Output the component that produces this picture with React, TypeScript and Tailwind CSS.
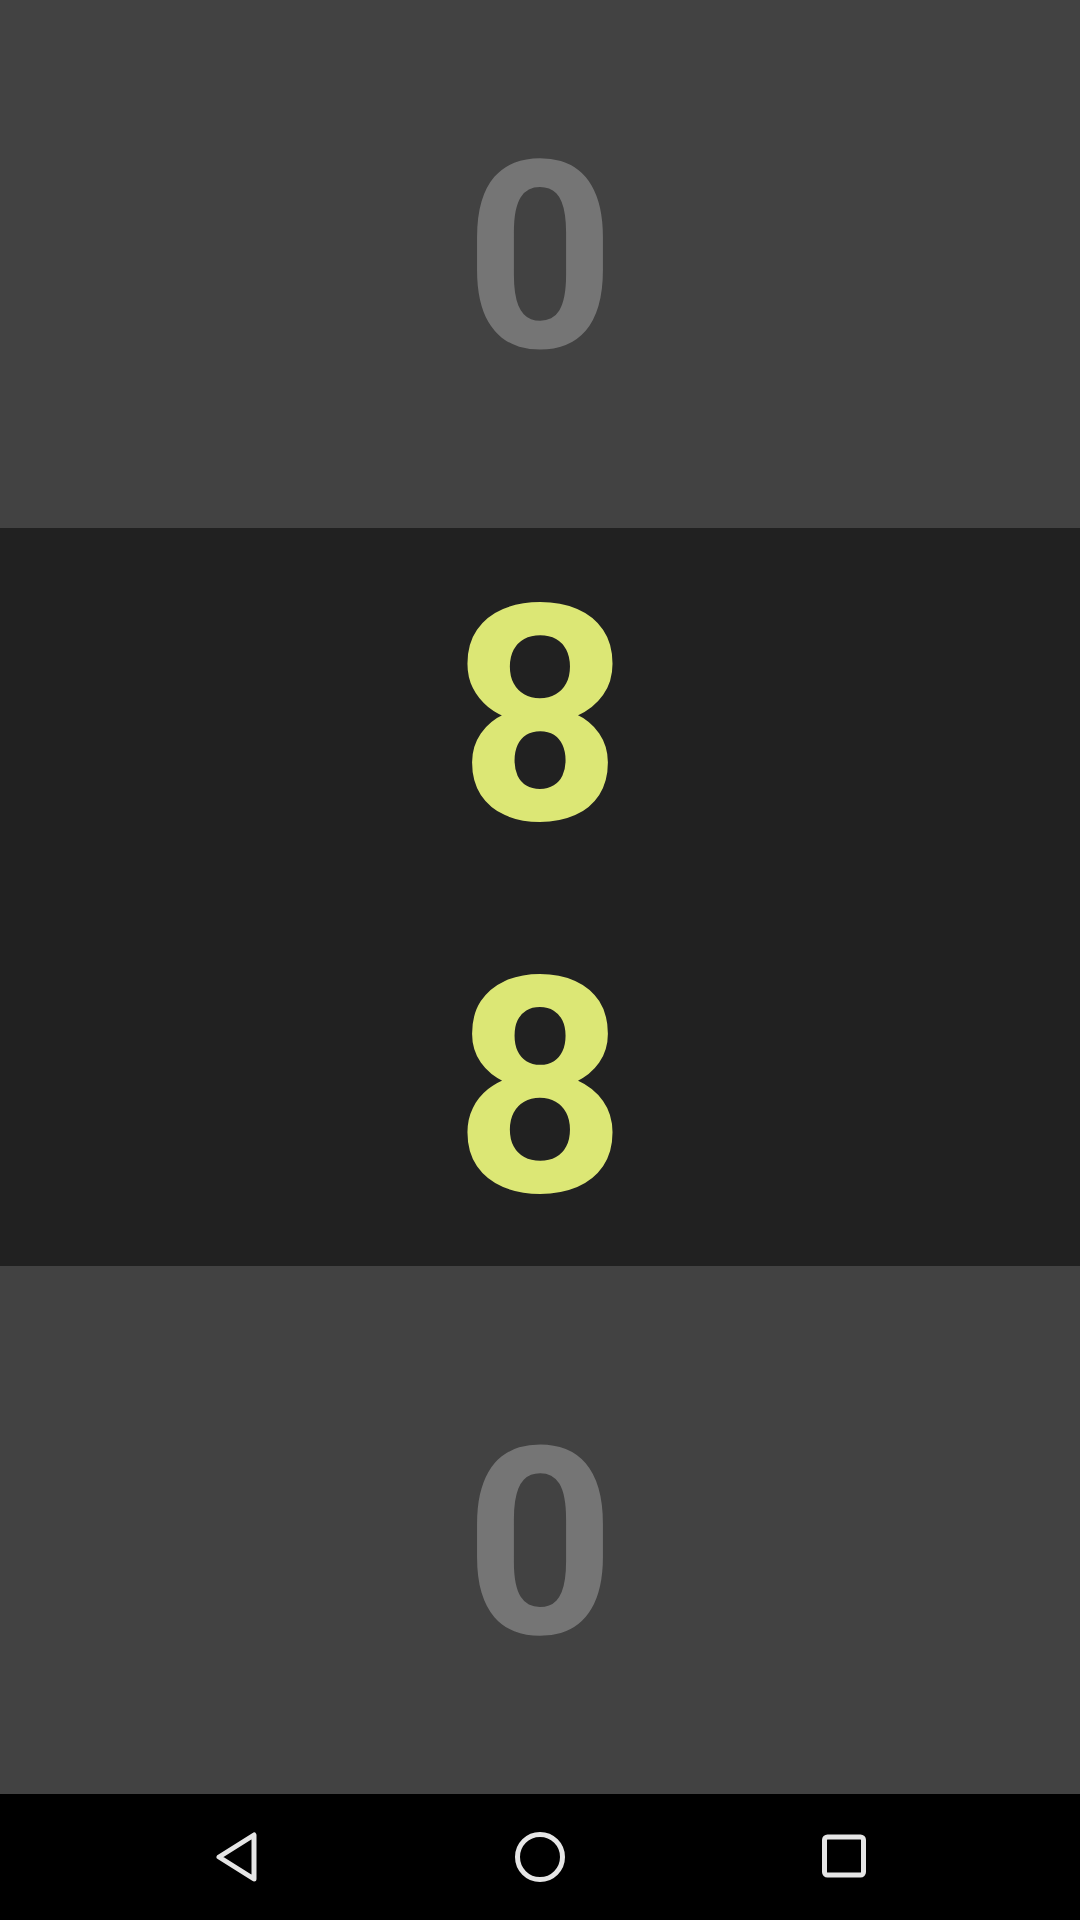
import React from 'react';

const digit = "font-['Roboto',sans-serif] font-bold leading-none select-none";

const NavBar = () => {
  return (
    <div className="flex h-[126px] items-center justify-center gap-[244px] bg-black">
      <svg width="60" height="60" viewBox="0 0 60 60" fill="none">
        <polygon points="13,30 48,8 48,52" stroke="#e6e6e6" strokeWidth="5" strokeLinejoin="round" />
      </svg>
      <svg width="60" height="60" viewBox="0 0 60 60" fill="none">
        <circle cx="30" cy="30" r="22.5" stroke="#e6e6e6" strokeWidth="5" />
      </svg>
      <svg width="60" height="60" viewBox="0 0 60 60" fill="none">
        <rect x="10.5" y="10" width="39" height="38" rx="3" stroke="#e6e6e6" strokeWidth="5" />
      </svg>
    </div>
  );
};

const App = () => {
  return (
    <div className="flex h-[1920px] w-[1080px] flex-col overflow-hidden">
      <div className="flex h-[528px] items-center justify-center bg-[#424242] pb-[12px]">
        <span className={`${digit} text-[262px] text-[#757575]`}>0</span>
      </div>
      <div className="flex h-[738px] flex-col bg-[#212121]">
        <div className="flex h-[369px] items-center justify-center pb-[10px]">
          <span className={`${digit} -scale-y-100 text-[301px] text-[#dce775]`}>8</span>
        </div>
        <div className="flex h-[369px] items-center justify-center pt-[14px]">
          <span className={`${digit} text-[301px] text-[#dce775]`}>8</span>
        </div>
      </div>
      <div className="flex h-[528px] items-center justify-center bg-[#424242] pt-[12px]">
        <span className={`${digit} -scale-y-100 text-[262px] text-[#757575]`}>0</span>
      </div>
      <NavBar />
    </div>
  );
};

export default App;
